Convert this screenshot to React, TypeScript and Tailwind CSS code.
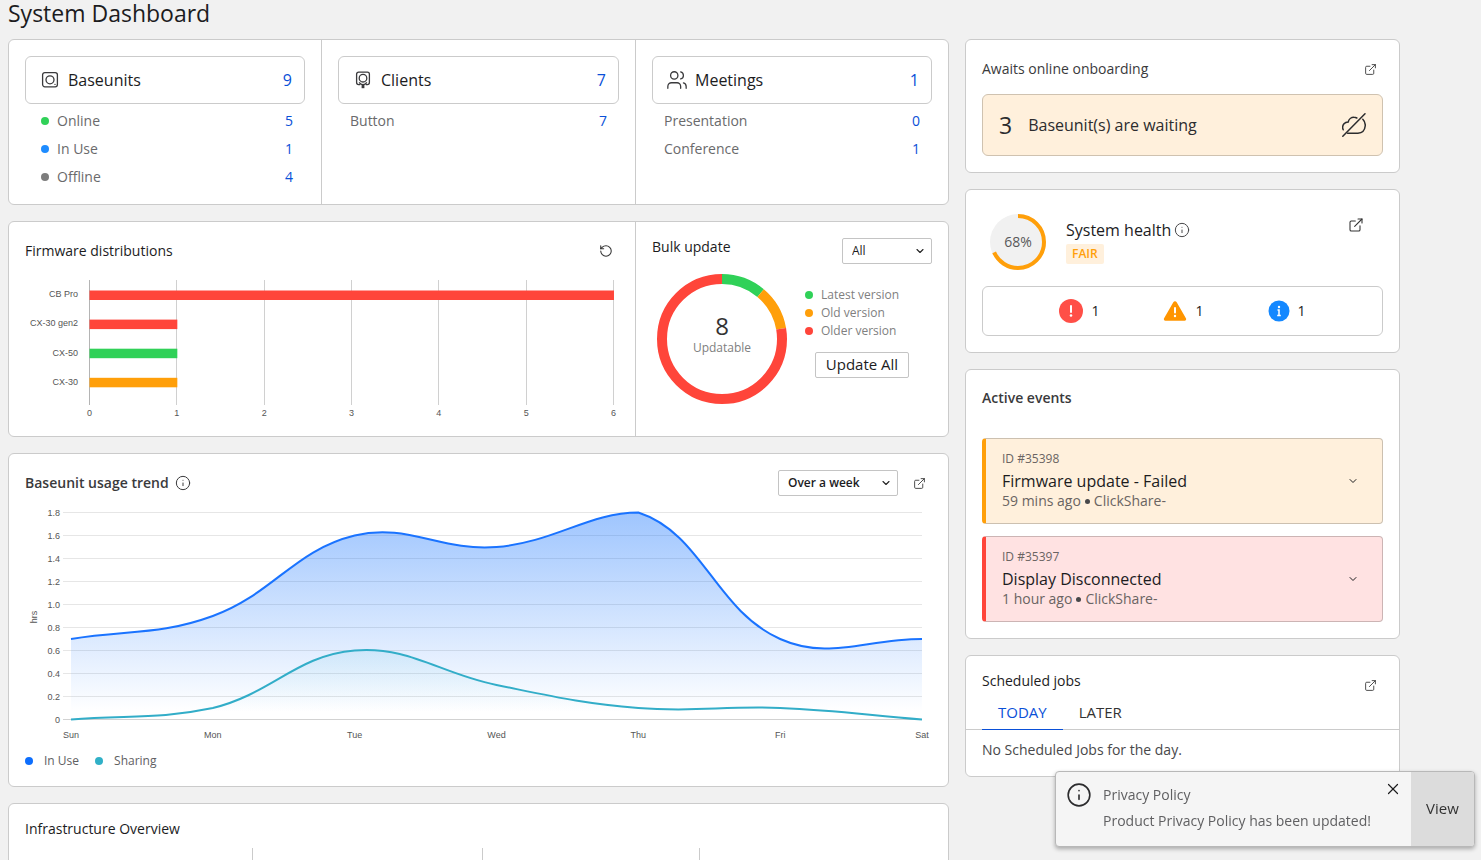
import { useState } from "react";
import type { ReactNode } from "react";
import { ChevronDown, ExternalLink, Info, RotateCcw, Users, X } from "lucide-react";

type Row = { label: string; value: number; dot?: string };

const baseunitRows: Row[] = [
  { label: "Online", value: 5, dot: "bg-[#30d158]" },
  { label: "In Use", value: 1, dot: "bg-[#1e8cff]" },
  { label: "Offline", value: 4, dot: "bg-[#7d7d7d]" },
];
const clientRows: Row[] = [{ label: "Button", value: 7 }];
const meetingRows: Row[] = [
  { label: "Presentation", value: 0 },
  { label: "Conference", value: 1 },
];

const firmware = [
  { model: "CB Pro", count: 6, color: "#ff453a" },
  { model: "CX-30 gen2", count: 1, color: "#ff453a" },
  { model: "CX-50", count: 1, color: "#30d158" },
  { model: "CX-30", count: 1, color: "#ff9f0a" },
];

const versions = [
  { label: "Latest version", count: 1, color: "#30d158", dot: "bg-[#30d158]" },
  { label: "Old version", count: 1, color: "#ff9f0a", dot: "bg-[#ff9f0a]" },
  { label: "Older version", count: 7, color: "#ff453a", dot: "bg-[#ff453a]" },
];

const days = ["Sun", "Mon", "Tue", "Wed", "Thu", "Fri", "Sat"];
const inUse = [0.7, 0.9, 1.6, 1.5, 1.8, 0.7, 0.7];
const sharing = [0, 0.1, 0.6, 0.3, 0.1, 0.1, 0];

const events = [
  {
    id: "35398",
    title: "Firmware update - Failed",
    age: "59 mins ago",
    tone: "border-l-[#ff9f0a] bg-[#fff0dc]",
  },
  {
    id: "35397",
    title: "Display Disconnected",
    age: "1 hour ago",
    tone: "border-l-[#ff453a] bg-[#ffe2e2]",
  },
];

function Card({ children, className = "" }: { children: ReactNode; className?: string }) {
  return (
    <section className={`rounded-md border border-[#cbcbcb] bg-white ${className}`}>
      {children}
    </section>
  );
}

function OpenLink({ label, small = true }: { label: string; small?: boolean }) {
  return (
    <a
      href="#"
      aria-label={label}
      className={`flex shrink-0 items-center justify-center text-[#333] ${
        small ? "size-[26px]" : "size-[22px]"
      }`}
    >
      <ExternalLink size={small ? 13 : 16} strokeWidth={1.6} />
    </a>
  );
}

function Picker({
  label,
  options,
  className,
}: {
  label: string;
  options: string[];
  className: string;
}) {
  return (
    <label className={`relative block h-[26px] shrink-0 ${className}`}>
      <span className="sr-only">{label}</span>
      <select className="block h-full w-full appearance-none rounded-xs border border-[#c4c4c4] bg-white pr-5 pl-[9px] text-xs leading-normal text-[#1c1c1e]">
        {options.map((option) => (
          <option key={option}>{option}</option>
        ))}
      </select>
      <ChevronDown
        size={12}
        strokeWidth={2.2}
        className="pointer-events-none absolute top-[7px] right-[6px] text-[#222]"
      />
    </label>
  );
}

function BaseunitIcon() {
  return (
    <svg width="24" height="24" viewBox="0 0 24 24" fill="none" stroke="#3a3a3c" strokeWidth="1.3">
      <rect x="4.6" y="4.6" width="14.8" height="14.2" rx="2.2" />
      <circle cx="12" cy="11.8" r="4" />
      <circle cx="17" cy="16.4" r=".7" fill="#3a3a3c" stroke="none" />
    </svg>
  );
}

function ClientIcon() {
  return (
    <svg width="24" height="24" viewBox="0 0 24 24" fill="none" stroke="#3a3a3c" strokeWidth="1.3">
      <path d="M9.200 16.600H7.600a2 2 0 0 1-2-2V6.200a2 2 0 0 1 2-2h8.800a2 2 0 0 1 2 2v8.400a2 2 0 0 1-2 2h-1.600" />
      <circle cx="12" cy="10.200" r="3.800" />
      <path d="M8.200 14.400c1 1.600 2.300 2.200 3.800 2.200s2.800-.6 3.800-2.200" />
      <path d="M12 16.400v3.800" strokeWidth="2.800" />
    </svg>
  );
}

function StatColumn({
  icon,
  title,
  total,
  rows,
}: {
  icon: ReactNode;
  title: string;
  total: number;
  rows: Row[];
}) {
  return (
    <div className="p-4 pb-[13px]">
      <a
        href="#"
        className="flex h-12 items-center gap-1.5 rounded-md border border-[#cbcbcb] px-3 text-base text-[#1c1c1e]"
      >
        <span className="flex size-6 items-center justify-center">{icon}</span>
        <span className="flex-1">{title}</span>
        <span className="text-[#0a50d8]">{total}</span>
      </a>
      <ul className="mt-[3px] text-sm text-[#6a6a6c]">
        {rows.map((row) => (
          <li
            key={row.label}
            className={`flex h-7 items-center gap-2 pr-3 ${row.dot ? "pl-4" : "pl-3"}`}
          >
            {row.dot ? <span className={`size-2 rounded-full ${row.dot}`} /> : null}
            <span className="flex-1">{row.label}</span>
            <a href="#" className="text-[#0a50d8]">
              {row.value}
            </a>
          </li>
        ))}
      </ul>
    </div>
  );
}

function FirmwareChart() {
  const left = 64;
  const unit = 87.33;
  return (
    <svg
      viewBox="0 0 594 148"
      className="mt-2 block w-full font-['Liberation_Sans']"
      role="img"
      aria-label="Firmware distributions by model"
    >
      {[0, 1, 2, 3, 4, 5, 6].map((n) => (
        <g key={n}>
          <path
            d={`M${Math.round(left + n * unit) + 0.5} 8V133`}
            stroke={n === 0 ? "#b4b4b4" : "#d0d0d0"}
          />
          <text x={left + n * unit + 0.5} y="144" textAnchor="middle" fontSize="9" fill="#555">
            {n}
          </text>
        </g>
      ))}
      {firmware.map((bar, i) => (
        <g key={bar.model}>
          <text x="53" y={25 + i * 29.3} textAnchor="end" fontSize="9" fill="#555">
            {bar.model}
          </text>
          <rect
            x={left + 0.5}
            y={18.5 + i * 29.1}
            width={bar.count * unit + 0.5}
            height="9.5"
            fill={bar.color}
          />
        </g>
      ))}
    </svg>
  );
}

function Donut() {
  const total = versions.reduce((sum, item) => sum + item.count, 0);
  const r = 60;
  const length = 2 * Math.PI * r;
  let done = 0;
  return (
    <div className="relative size-[130px] shrink-0">
      <svg viewBox="0 0 130 130" className="size-full -rotate-90" fill="none" strokeWidth="10">
        {versions.map((item) => {
          const part = (item.count / total) * length;
          const offset = -done;
          done += part;
          return (
            <circle
              key={item.label}
              cx="65"
              cy="65"
              r={r}
              stroke={item.color}
              strokeDasharray={`${part} ${length - part}`}
              strokeDashoffset={offset}
            />
          );
        })}
      </svg>
      <div className="absolute inset-0 flex flex-col items-center justify-center pb-1.5">
        <span className="text-2xl leading-6 text-[#333]">8</span>
        <span className="text-xs leading-5 text-[#808080]">Updatable</span>
      </div>
    </div>
  );
}

const chart = { left: 46, right: 897, top: 8.5, bottom: 215.5 };

function toPoints(values: number[]) {
  const step = (chart.right - chart.left) / (values.length - 1);
  return values.map((v, i) => [
    chart.left + i * step,
    chart.bottom - (v / 1.8) * (chart.bottom - chart.top),
  ]);
}

// cubic spline with tension 0.4, control points kept inside the plot area
function splinePath(values: number[]) {
  const pts = toPoints(values);
  const clamp = (y: number) => Math.min(chart.bottom, Math.max(chart.top, y));
  const controls = pts.map((cur, i) => {
    const prev = pts[i - 1] ?? cur;
    const next = pts[i + 1] ?? cur;
    const d01 = Math.hypot(cur[0] - prev[0], cur[1] - prev[1]);
    const d12 = Math.hypot(next[0] - cur[0], next[1] - cur[1]);
    const fa = (0.4 * d01) / (d01 + d12);
    const fb = (0.4 * d12) / (d01 + d12);
    const dx = next[0] - prev[0];
    const dy = next[1] - prev[1];
    return {
      before: [cur[0] - fa * dx, clamp(cur[1] - fa * dy)],
      after: [cur[0] + fb * dx, clamp(cur[1] + fb * dy)],
    };
  });
  return pts
    .map((p, i) =>
      i === 0 ? `M${p}` : `C${controls[i - 1].after} ${controls[i].before} ${p}`,
    )
    .join(" ");
}

function TrendChart() {
  const usePath = splinePath(inUse);
  const sharePath = splinePath(sharing);
  const close = `L${chart.right} ${chart.bottom}L${chart.left} ${chart.bottom}Z`;
  return (
    <svg
      viewBox="0 0 907 240"
      className="mt-2 block w-full font-['Liberation_Sans']"
      role="img"
      aria-label="Baseunit usage in hours per day"
    >
      <defs>
        <linearGradient id="use" gradientUnits="userSpaceOnUse" x1="0" y1="8" x2="0" y2="208">
          <stop offset="0" stopColor="#0d6efd" stopOpacity=".4" />
          <stop offset="1" stopColor="#0d6efd" stopOpacity="0" />
        </linearGradient>
        <linearGradient id="share" gradientUnits="userSpaceOnUse" x1="0" y1="140" x2="0" y2="208">
          <stop offset="0" stopColor="#30b0d8" stopOpacity=".12" />
          <stop offset="1" stopColor="#30b0d8" stopOpacity="0" />
        </linearGradient>
      </defs>
      {Array.from({ length: 10 }, (_, i) => (
        <g key={i}>
          <path d={`M38 ${8.5 + i * 23}H897`} stroke={i === 9 ? "#d2d2d2" : "#e6e6e6"} />
          <text x="35" y={11.5 + i * 23} textAnchor="end" fontSize="9" fill="#555">
            {i === 9 ? "0" : ((9 - i) * 0.2).toFixed(1)}
          </text>
        </g>
      ))}
      <path d={usePath + close} fill="url(#use)" />
      <path d={sharePath + close} fill="url(#share)" />
      <path d={usePath} fill="none" stroke="#1a73ff" strokeWidth="2" />
      <path d={sharePath} fill="none" stroke="#32adc8" strokeWidth="2" />
      {toPoints(inUse).map(([x], i) => (
        <text key={days[i]} x={x} y="234" textAnchor="middle" fontSize="9" fill="#555">
          {days[i]}
        </text>
      ))}
      <text transform="rotate(-90 12 113)" x="12" y="113" textAnchor="middle" fontSize="9" fill="#555">
        hrs
      </text>
    </svg>
  );
}

function HealthRing() {
  const length = 2 * Math.PI * 26;
  return (
    <div className="relative size-14 shrink-0">
      <svg viewBox="0 0 56 56" className="size-full -rotate-90">
        <circle cx="28" cy="28" r="28" fill="#f1f1f1" />
        <circle
          cx="28"
          cy="28"
          r="26"
          fill="none"
          stroke="#ff9f0a"
          strokeWidth="4"
          strokeDasharray={`${length * 0.68} ${length}`}
        />
      </svg>
      <span className="absolute inset-0 flex items-center justify-center text-sm text-[#58585a]">
        68%
      </span>
    </div>
  );
}

function CloudOffIcon() {
  return (
    <svg
      width="24"
      height="24"
      viewBox="0 0 24 24"
      fill="none"
      stroke="#2c2c2e"
      strokeWidth="1.5"
      strokeLinecap="round"
    >
      <path d="M.8 23.200 23 .8" />
      <path d="M1.200 16.800c-1-2.200-.6-4.400.8-6 1.100-1.300 2.600-1.800 4.200-1.800.6-2.800 3.100-4.900 5.900-4.800 1 0 1.900.3 2.700.8" />
      <path d="M20.800 6.200c2 2 2.700 4.200 2.400 6.800-.4 4.200-3.200 7-7.300 7.300H5.600" />
    </svg>
  );
}

function SystemHealth() {
  return (
    <Card className="p-4">
      <div className="mb-4 flex items-center gap-5 pt-2 pl-2">
        <HealthRing />
        <div className="flex flex-1 flex-col items-start gap-1">
          <h2 className="flex items-center gap-[3px] text-base leading-5 text-[#1c1c1e]">
            System health
            <Info size={16} strokeWidth={1.5} className="text-[#48484a]" />
          </h2>
          <span className="rounded-xs bg-[#fff0dc] px-1.5 text-xs leading-5 font-semibold text-[#ff9f0a]">
            FAIR
          </span>
        </div>
        <div className="mr-4 self-start">
          <OpenLink label="Open system health" small={false} />
        </div>
      </div>
      <ul className="flex h-[50px] items-center justify-center gap-16 rounded-md border border-[#cbcbcb] text-sm text-[#1c1c1e]">
        <li className="flex items-center gap-2">
          <svg width="24" height="24" viewBox="0 0 24 24">
            <circle cx="12" cy="12" r="12" fill="#ff4f47" />
            <path d="M12 7v6" stroke="#fff" strokeWidth="2" strokeLinecap="round" />
            <circle cx="12" cy="16.500" r="1.300" fill="#fff" />
          </svg>
          1
        </li>
        <li className="flex items-center gap-2">
          <svg width="24" height="24" viewBox="0 0 24 24">
            <path
              d="M10.300 3.200a2 2 0 0 1 3.400 0l9.200 16.100a1.600 1.600 0 0 1-1.400 2.500H2.500a1.600 1.600 0 0 1-1.400-2.500z"
              fill="#ff9500"
            />
            <path d="M12 9v4.500" stroke="#fff" strokeWidth="2" strokeLinecap="round" />
            <circle cx="12" cy="17" r="1.200" fill="#fff" />
          </svg>
          1
        </li>
        <li className="flex items-center gap-2">
          <svg width="22" height="22" viewBox="0 0 22 22">
            <circle cx="11" cy="11" r="10.500" fill="#1488ff" />
            <circle cx="11" cy="7" r="1.200" fill="#fff" />
            <path d="M9.500 10H11v5.300M9.200 15.500h3.600" stroke="#fff" strokeWidth="1.500" fill="none" />
          </svg>
          1
        </li>
      </ul>
    </Card>
  );
}

function ScheduledJobs() {
  const [tab, setTab] = useState("TODAY");
  return (
    <Card className="p-4">
      <div className="flex items-start justify-between">
        <h2 className="text-sm leading-[18px] text-[#1c1c1e]">Scheduled jobs</h2>
        <OpenLink label="Open scheduled jobs" />
      </div>
      <div role="tablist" className="-mx-4 flex h-8 border-b border-[#cbcbcb] px-4">
        {["TODAY", "LATER"].map((name) => (
          <button
            key={name}
            type="button"
            role="tab"
            aria-selected={tab === name}
            onClick={() => setTab(name)}
            className={`-mb-px border-b px-4 pb-1 text-[15px] leading-5 ${
              tab === name ? "border-[#0a50d8] text-[#0a50d8]" : "border-transparent text-[#333]"
            }`}
          >
            {name}
          </button>
        ))}
      </div>
      <p className="pt-[10px] text-sm leading-5 text-[#48484a]">
        {tab === "TODAY" ? "No Scheduled Jobs for the day." : "No Scheduled Jobs."}
      </p>
    </Card>
  );
}

function PrivacyToast() {
  const [open, setOpen] = useState(true);
  if (!open) return null;

  return (
    <aside className="fixed right-[6px] bottom-[13px] flex h-[76px] w-[420px] overflow-hidden rounded-sm border border-[#b8b8b8] bg-[#f5f5f5] text-sm text-[#606062] shadow-[0_2px_4px_rgba(0,0,0,0.3)]">
      <Info size={26} strokeWidth={1.5} className="mt-[10px] ml-[10px] shrink-0 text-[#2c2c2e]" />
      <div className="flex-1 pt-[10px] pl-[11px] leading-[26px]">
        <p>Privacy Policy</p>
        <p>Product Privacy Policy has been updated!</p>
      </div>
      <button
        type="button"
        aria-label="Close"
        onClick={() => setOpen(false)}
        className="absolute top-2 right-[72px] flex size-[18px] items-center justify-center text-[#1c1c1e]"
      >
        <X size={18} strokeWidth={1.6} />
      </button>
      <button type="button" className="w-[63px] shrink-0 bg-[#dcdcdc] text-[15px] text-[#333]">
        View
      </button>
    </aside>
  );
}

export default function App() {
  return (
    <main className="h-screen overflow-hidden bg-[#f1f1f1] pr-[81px] pl-2 font-['Open_Sans',sans-serif]">
      <h1 className="mb-[13px] text-[23px] leading-[26px] text-[#1c1c1e]">System Dashboard</h1>
      <div className="grid grid-cols-[941fr_435fr] items-start gap-4">
        <div className="flex flex-col gap-4">
          <Card className="grid grid-cols-[313fr_314fr_312fr] divide-x divide-[#cbcbcb]">
            <StatColumn icon={<BaseunitIcon />} title="Baseunits" total={9} rows={baseunitRows} />
            <StatColumn icon={<ClientIcon />} title="Clients" total={7} rows={clientRows} />
            <StatColumn
              icon={<Users size={22} strokeWidth={1.4} className="text-[#3a3a3c]" />}
              title="Meetings"
              total={1}
              rows={meetingRows}
            />
          </Card>

          <Card className="grid grid-cols-[627fr_312fr] divide-x divide-[#cbcbcb]">
            <div className="p-4">
              <div className="flex h-[26px] items-center justify-between">
                <h2 className="text-sm text-[#1c1c1e]">Firmware distributions</h2>
                <button
                  type="button"
                  aria-label="Refresh"
                  className="flex size-[26px] items-center justify-center text-[#333]"
                >
                  <RotateCcw size={14} strokeWidth={1.8} />
                </button>
              </div>
              <FirmwareChart />
            </div>
            <div className="p-4">
              <div className="flex items-start justify-between">
                <h2 className="text-sm leading-[18px] text-[#1c1c1e]">Bulk update</h2>
                <Picker label="Models" options={["All", "CX-30", "CX-50"]} className="w-[90px]" />
              </div>
              <div className="mt-[10px] flex gap-[18px] pl-[5px]">
                <Donut />
                <div className="pt-3">
                  <ul className="text-xs leading-[18px] text-[#808080]">
                    {versions.map((item) => (
                      <li key={item.label} className="flex items-center gap-2">
                        <span className={`size-2 rounded-full ${item.dot}`} />
                        {item.label}
                      </li>
                    ))}
                  </ul>
                  <button
                    type="button"
                    className="mt-3 ml-[10px] h-[26px] w-[94px] rounded-xs border border-[#c4c4c4] pb-0.5 text-[15px] leading-5 whitespace-nowrap text-[#1c1c1e]"
                  >
                    Update All
                  </button>
                </div>
              </div>
            </div>
          </Card>

          <Card className="p-4">
            <div className="flex h-[26px] items-center gap-2">
              <h2 className="flex flex-1 items-center gap-1.5 text-sm font-semibold text-[#3a3a3c]">
                Baseunit usage trend
                <Info size={16} strokeWidth={1.5} />
              </h2>
              <Picker
                label="Period"
                options={["Over a week", "Over a month"]}
                className="w-[120px] font-semibold"
              />
              <OpenLink label="Open usage trend" />
            </div>
            <TrendChart />
            <ul className="mt-2 flex gap-4 text-xs leading-[18px] text-[#606062]">
              <li className="flex items-center gap-[11px]">
                <span className="size-2 rounded-full bg-[#0d6efd]" />
                In Use
              </li>
              <li className="flex items-center gap-[11px]">
                <span className="size-2 rounded-full bg-[#30b0c7]" />
                Sharing
              </li>
            </ul>
          </Card>

          <Card className="p-4">
            <h2 className="text-sm leading-[18px] text-[#1c1c1e]">Infrastructure Overview</h2>
            <div className="mt-[10px] grid h-20 grid-cols-[228fr_230fr_217fr_232fr] divide-x divide-[#cbcbcb]">
              <div />
              <div />
              <div />
              <div />
            </div>
          </Card>
        </div>

        <div className="flex flex-col gap-4">
          <Card className="p-4">
            <div className="flex h-[26px] items-center justify-between">
              <h2 className="text-sm text-[#3a3a3c]">Awaits online onboarding</h2>
              <OpenLink label="Open onboarding" />
            </div>
            <div className="mt-3 flex h-[62px] items-center rounded-md border border-[#cfc2b0] bg-[#fff0dc] px-4 text-[#2c2c2e]">
              <span className="text-[23px]">3</span>
              <span className="flex-1 pl-4 text-base">Baseunit(s) are waiting</span>
              <CloudOffIcon />
            </div>
          </Card>

          <SystemHealth />

          <Card className="p-4">
            <h2 className="text-sm leading-6 font-semibold text-[#3a3a3c]">Active events</h2>
            <ul className="mt-7 flex flex-col gap-3">
              {events.map((event) => (
                <li
                  key={event.id}
                  className={`flex items-center justify-between rounded-sm border border-l-4 border-y-black/20 border-r-black/20 pr-[23px] pl-4 ${event.tone}`}
                >
                  <div className="pt-[10px] pb-[14px] text-[#6a6462]">
                    <p className="text-xs leading-5">ID #{event.id}</p>
                    <h3 className="text-base leading-6 text-[#1c1c1e]">{event.title}</h3>
                    <p className="flex items-center gap-1 text-sm leading-4">
                      {event.age}
                      <span className="size-[5px] rounded-full bg-[#48484a]" />
                      ClickShare-
                    </p>
                  </div>
                  <button type="button" aria-label="Show details" className="text-[#1c1c1e]">
                    <ChevronDown size={12} strokeWidth={2} />
                  </button>
                </li>
              ))}
            </ul>
          </Card>

          <ScheduledJobs />
        </div>
      </div>
      <PrivacyToast />
    </main>
  );
}
